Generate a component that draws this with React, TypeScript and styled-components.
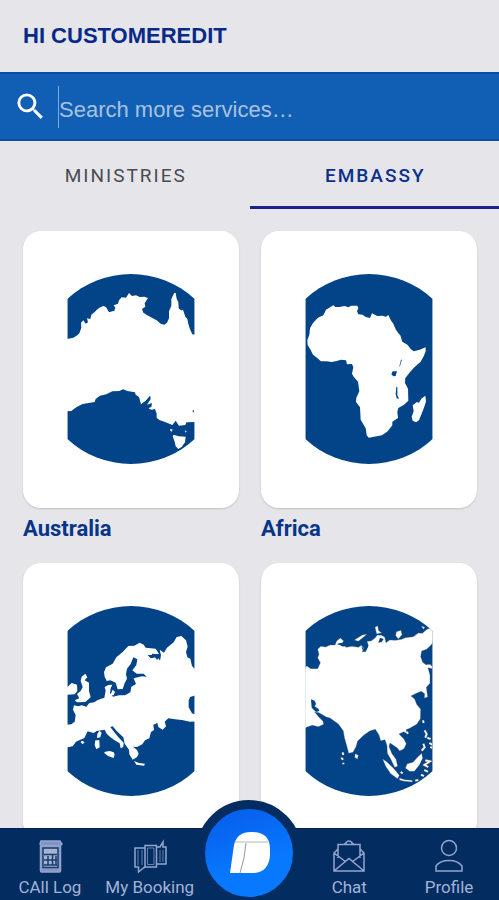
import React from "react";
import styled, { createGlobalStyle } from "styled-components";

const GlobalStyle = createGlobalStyle`
  *, *::before, *::after { box-sizing: border-box; }
  body { margin: 0; background: #e5e5ea; }
  button, input { font: inherit; color: inherit; }
`;

const sans = `"Liberation Sans", Arial, sans-serif`;
const roboto = `Roboto, "Noto Sans", sans-serif`;

const Screen = styled.div`
  display: flex;
  flex-direction: column;
  height: 100vh;
  background: #e5e5ea;
`;

const Header = styled.header`
  flex: none;
  padding: 22px 23px;
`;

const Greeting = styled.h1`
  margin: 0;
  font: bold 22px/28px ${sans};
  color: #06298a;
`;

const SearchBar = styled.label`
  flex: none;
  display: flex;
  align-items: center;
  gap: 10px;
  height: 69px;
  padding: 0 13px;
  background: #105fb4;
  border-top: 2px solid #064fa5;
  border-bottom: 2px solid #064fa5;
`;

const SearchIcon = styled.svg`
  flex: none;
  width: 35px;
  height: 35px;
  fill: #fff;
`;

const SearchInput = styled.input`
  flex: 1;
  min-width: 0;
  height: 42px;
  padding: 6px 0 0;
  border: 0;
  border-left: 1px solid #7fa9d8;
  outline: 0;
  background: none;
  color: #fff;
  font: 22px/28px ${sans};
  &::placeholder { color: #a9c2df; opacity: 1; }
`;

const Tabs = styled.div`
  flex: none;
  display: grid;
  grid-template-columns: 1fr 1fr;
`;

const Tab = styled.button<{ $active?: boolean }>`
  height: 68px;
  padding: 4px 0 0 2px;
  border: 0;
  border-bottom: 3px solid ${(p) => (p.$active ? "#17248a" : "transparent")};
  background: none;
  color: ${(p) => (p.$active ? "#0a3089" : "#4b4b50")};
  font: ${(p) => (p.$active ? 500 : 400)} 19px/24px ${roboto};
  letter-spacing: 2px;
`;

const Content = styled.main`
  flex: 1;
  min-height: 0;
  overflow-y: auto;
  scrollbar-width: none;
  padding: 22px 22px 0 23px;
`;

const Grid = styled.div`
  display: grid;
  grid-template-columns: 1fr 1fr;
  gap: 20px 22px;
`;

const Region = styled.a`
  color: #06358a;
  text-decoration: none;
`;

const Card = styled.div`
  display: flex;
  justify-content: center;
  padding: 43px 0 44px;
  border-radius: 18px;
  background: #fff;
  box-shadow: 0 1px 2px rgba(0, 0, 0, 0.16);
`;

const MapDrawing = styled.svg`
  width: 128px;
  height: 190px;
`;

const RegionName = styled.div`
  padding-top: 7px;
  font: bold 22px/28px ${roboto};
`;

const BottomNav = styled.nav`
  flex: none;
  position: relative;
  display: grid;
  grid-template-columns: repeat(5, 1fr);
  height: 72px;
  background: #032d60;
  border-top: 1px solid #022250;
`;

const NavItem = styled.button`
  display: flex;
  flex-direction: column;
  align-items: center;
  gap: 2px;
  padding: 9px 0 0;
  border: 0;
  background: none;
  color: #a2b3d9;
  font: 400 17px/22px ${roboto};
  white-space: nowrap;
`;

const NavIcon = styled.svg`
  width: 36px;
  height: 36px;
  fill: none;
  stroke: #93a5cf;
  stroke-width: 1.5;
`;

const HomeSlot = styled.div`
  position: relative;
`;

const HomeButton = styled.button`
  position: absolute;
  left: 50%;
  bottom: -6px;
  transform: translateX(-50%);
  width: 106px;
  height: 106px;
  padding: 0;
  border: 9px solid #032d60;
  border-radius: 50%;
  background: linear-gradient(160deg, #075be8, #0879ff 65%);
`;

const HomeMark = styled.svg`
  display: block;
  width: 88px;
  height: 88px;
`;

/* Land outlines share one coordinate space: 384 x 570 units starting at 21,27. */
type MapData = { name: string; land: string; water?: string; islands?: string };

const regions: MapData[] = [
  {
    name: "Australia",
    land:
      "M15 223L40 218L52 211L58 205L64 188L63 173L70 166L77 176L84 172L81 160L91 162L94 149L104 141L113 132L121 127L130 123L138 126L147 142L152 140L163 137L166 128L161 121L174 116L177 106L185 97L198 98L207 84L216 93L228 91L239 96L253 95L264 99L254 115L256 125L246 132L250 143L262 151L277 159L290 166L302 176L313 179L321 173L327 160L327 139L334 122L334 102L343 83L347 84L350 101L355 112L356 130L363 136L369 134L376 155L382 162L385 177L390 193L397 208L410 210L410 471L379 472L376 480L357 482L347 467L337 480L317 472L298 465L290 458L290 446L285 432L275 434L264 430L274 426L276 414L261 419L272 402L270 392L256 409L243 418L237 396L227 389L225 382L202 378L189 373L178 378L157 379L139 388L120 392L107 402L104 411L86 414L68 417L50 426L34 438L15 439ZM341 509L356 514L377 515L375 532L365 546L355 552L347 544L344 530L338 514ZM331 491L338 494L335 500L331 497ZM374 496L380 499L377 503Z",
    water: "M256 409L272 394L270 400L262 410L252 421L263 425L268 433L256 431L249 424L254 415L246 416ZM397 437L402 435L401 444Z",
  },
  {
    name: "Africa",
    land:
      "M106 121L112 126L124 126L140 123L151 127L160 122L178 122L181 130L177 139L181 148L194 149L203 156L216 159L222 145L238 153L253 152L264 155L271 150L278 165L286 176L293 193L301 205L307 211L313 230L328 239L339 253L347 259L365 254L383 247L383 259L377 274L368 290L350 306L337 320L322 339L321 354L330 371L331 407L318 419L301 429L298 440L300 459L283 470L283 481L269 499L252 511L229 515L212 518L206 511L203 490L188 464L186 427L174 411L175 398L184 379L180 350L167 335L162 326L166 307L162 297L147 298L144 286L129 284L116 288L101 291L86 289L69 289L53 275L45 269L38 255L29 240L28 226L34 209L36 190L45 174L60 158L76 151L84 134ZM382 392L384 409L380 422L373 441L363 466L354 472L344 467L341 455L347 439L344 421L357 411L363 413L370 401Z",
    water: "M284 319L297 319L293 333L286 334L280 328ZM295 365L298 366L298 390L303 401L296 400L293 386ZM309 284L312 284L309 292L306 304L304 304Z",
  },
  {
    name: "Europe",
    land:
      "M15 384L34 382L44 374L47 354L39 338L42 325L55 328L65 325L79 329L88 318L103 316L113 309L133 302L137 281L134 270L145 264L157 263L152 274L150 289L159 299L177 295L195 295L211 286L214 269L228 261L221 244L246 238L260 239L251 230L230 230L217 220L229 204L232 187L220 181L212 201L201 215L198 232L201 245L194 259L188 276L173 277L167 257L151 250L140 252L134 239L132 226L138 211L158 200L169 181L188 165L205 147L223 146L239 137L251 143L257 152L287 155L297 170L287 174L263 174L272 184L293 180L300 191L303 175L299 158L312 167L321 152L341 136L350 120L364 117L378 130L383 149L378 165L382 181L391 185L396 207L410 222L410 294L390 300L386 311L386 331L396 349L410 354L410 373L390 374L366 369L345 367L325 364L314 374L318 388L308 398L295 390L292 378L280 383L282 399L273 405L268 424L255 430L247 442L231 450L219 449L231 459L236 470L231 480L218 488L208 472L207 458L194 440L190 421L170 402L158 388L151 390L163 406L174 419L191 437L190 450L182 454L179 439L164 430L151 421L140 410L134 398L110 402L101 408L83 403L73 423L48 434L38 448L22 451L15 448ZM76 230L82 241L74 250L87 257L87 282L92 301L76 315L51 316L44 310L58 304L51 291L62 282L68 270L62 252L65 239ZM35 258L51 263L52 282L44 292L20 293L15 280L22 270ZM118 401L125 407L121 421L111 423L112 411ZM106 430L118 430L119 451L109 457L104 444ZM136 464L149 462L161 466L164 472L161 483L144 477L132 467ZM222 492L237 498L255 500L252 506L229 503ZM65 431L74 435L68 442L62 436ZM158 278L165 284L161 295L151 294Z",
    water: "M276 170L293 172L299 180L291 189L285 180L274 179Z",
  },
  {
    name: "Asia",
    land:
      "M15 212L27 207L38 215L59 215L67 197L59 182L63 172L59 157L68 148L83 150L96 144L111 144L116 132L127 123L137 132L130 142L145 151L162 148L181 151L190 145L197 153L193 164L203 164L211 145L207 133L219 132L231 123L238 114L250 115L260 120L264 137L275 129L293 130L311 127L322 122L346 119L361 108L373 109L385 98L402 90L410 129L400 143L386 157L371 162L368 179L374 196L384 203L396 202L410 216L390 212L396 235L396 259L385 271L389 300L379 303L380 290L370 283L355 289L339 297L350 306L356 322L368 337L367 366L356 382L335 394L324 398L328 411L317 404L303 411L317 425L325 440L318 455L305 462L298 453L276 438L273 449L282 470L294 487L299 508L290 511L278 486L268 469L267 446L261 428L248 431L243 414L232 397L215 402L198 414L179 432L174 449L165 466L152 469L147 449L139 421L136 402L127 389L121 381L96 363L85 360L63 347L50 345L63 361L75 373L77 382L61 389L43 385L15 394ZM254 486L266 494L286 513L304 535L299 545L278 530L263 508ZM371 469L374 484L364 504L349 523L335 523L322 513L328 500L345 496L359 480ZM305 543L320 548L342 550L344 555L319 553L304 549ZM172 470L181 475L178 487L170 481ZM169 129L193 114L207 112L181 133ZM231 91L239 86L242 101L251 107L236 111ZM295 104L309 100L312 113L301 126L293 116ZM370 87L381 91L376 97Z",
    water: "M39 307L50 311L54 321L50 328L61 335L64 342L54 345L41 332ZM116 141L130 137L140 145L136 149L125 144ZM190 147L196 154L194 160ZM205 143L211 147L205 160ZM246 122L257 126L251 135L241 137Z",
    islands:
      "M134 466L136 474M130 482L135 488M136 497V502M375 370L377 378M380 400L386 411L382 422M388 422L398 426M394 438L403 443M376 440L380 451L371 461M397 450L404 453M382 490L396 493L379 504L391 510M379 519L390 524M308 525L314 529M326 404L330 410M352 551L361 549M369 533L378 537",
  },
];

function RegionMap({ region }: { region: MapData }) {
  const clip = `globe-${region.name}`;
  return (
    <MapDrawing viewBox="21 27 384 570" aria-hidden="true">
      <defs>
        <clipPath id={clip}>
          <path d="M22 102A281 281 0 0 1 404 102V522A281 281 0 0 1 22 522Z" />
        </clipPath>
      </defs>
      <path fill="#034489" clipPath={`url(#${clip})`} d="M20 20H410V600H20Z" />
      <path fill="#fff" stroke={region.islands ? "#5c6170" : "none"} strokeWidth="1" d={region.land} clipPath={region.islands ? `url(#${clip})` : undefined} />
      <path fill="none" stroke="#fff" strokeWidth="3" d={region.name === "Asia" ? "M21 217V393M406 90V130" : "M0 0"} />
      {region.water && <path fill="#034489" d={region.water} />}
      {region.islands && (
        <g fill="none" clipPath={`url(#${clip})`}>
          <path d={region.islands} stroke="#5c6170" strokeWidth="8" />
          <path d={region.islands} stroke="#fff" strokeWidth="5" />
        </g>
      )}
    </MapDrawing>
  );
}

export default function App() {
  return (
    <>
      <GlobalStyle />
      <Screen>
        <Header>
          <Greeting>HI CUSTOMEREDIT</Greeting>
        </Header>
        <SearchBar>
          <SearchIcon viewBox="0 0 24 24" aria-hidden="true">
            <path d="M15.5 14h-.79l-.28-.27A6.47 6.47 0 0 0 16 9.5 6.5 6.5 0 1 0 9.5 16c1.61 0 3.09-.59 4.23-1.57l.27.28v.79l5 4.99L20.49 19l-4.99-5zm-6 0C7.01 14 5 11.99 5 9.5S7.01 5 9.5 5 14 7.01 14 9.5 11.99 14 9.5 14z" />
          </SearchIcon>
          <SearchInput type="text" aria-label="Search" placeholder="Search more services…" />
        </SearchBar>
        <Tabs role="tablist">
          <Tab role="tab" aria-selected="false">MINISTRIES</Tab>
          <Tab role="tab" aria-selected="true" $active>EMBASSY</Tab>
        </Tabs>
        <Content>
          <Grid>
            {regions.map((region) => (
              <Region key={region.name} href={`#${region.name.toLowerCase()}`}>
                <Card>
                  <RegionMap region={region} />
                </Card>
                <RegionName>{region.name}</RegionName>
              </Region>
            ))}
          </Grid>
        </Content>
        <BottomNav>
          <NavItem>
            <NavIcon viewBox="0 0 36 36" aria-hidden="true">
              <path d="M9 3H28L30 6L27.500 8H10L8 6Z" fill="#7f94bf" />
              <path d="M8.500 8H28.500V33Q28.500 34 27.500 34H9.500Q8.500 34 8.500 33Z" fill="#8799c2" />
              <path d="M11 10H26V29.500H11Z" fill="#a5b2d0" stroke="#193c70" />
              <path d="M12 16.500H25M12 22H25M12 27H25M16 18V27M20.500 16V27M24 18V27" stroke="#193c70" />
            </NavIcon>
            CAll Log
          </NavItem>
          <NavItem>
            <NavIcon viewBox="0 0 36 36" aria-hidden="true">
              <path d="M13 10H3V29H6.500V34L12 29.500H13M13 7.500H24.500V29H13ZM25 9H28L31 4V9H34V26H25" />
              <path d="M6 12V27M10 12V27M15.500 10H22V26.500H15.500ZM28 12V24M31 12V24" strokeWidth="0.700" />
            </NavIcon>
            My Booking
          </NavItem>
          <HomeSlot>
            <HomeButton aria-label="Home">
              <HomeMark viewBox="0 0 88 88" aria-hidden="true">
                <path fill="#fff" d="M25 64L29 36Q32 23 46 23Q65 23 65 40V46Q64 64 47 64Z" />
                <path fill="none" stroke="#d6dae0" strokeWidth="2" d="M30 33H63" />
                <path fill="none" stroke="#8b98aa" d="M41 34L39 49L35 64" />
              </HomeMark>
            </HomeButton>
          </HomeSlot>
          <NavItem>
            <NavIcon viewBox="0 0 36 36" aria-hidden="true">
              <path d="M7 20V6.500H29V20M13 6Q15 6 15.500 4Q18 2 20.500 4Q21 6 23 6M7 11L3 15V33H33V15L29 11M3 15L15 24M33 15L21 24M3 33L18 20.500L33 33" />
            </NavIcon>
            Chat
          </NavItem>
          <NavItem>
            <NavIcon viewBox="0 0 36 36" aria-hidden="true">
              <circle cx="18" cy="10" r="7.500" />
              <path d="M5 33V28Q9 22.500 18 22.500T31 28V33Z" />
            </NavIcon>
            Profile
          </NavItem>
        </BottomNav>
      </Screen>
    </>
  );
}
